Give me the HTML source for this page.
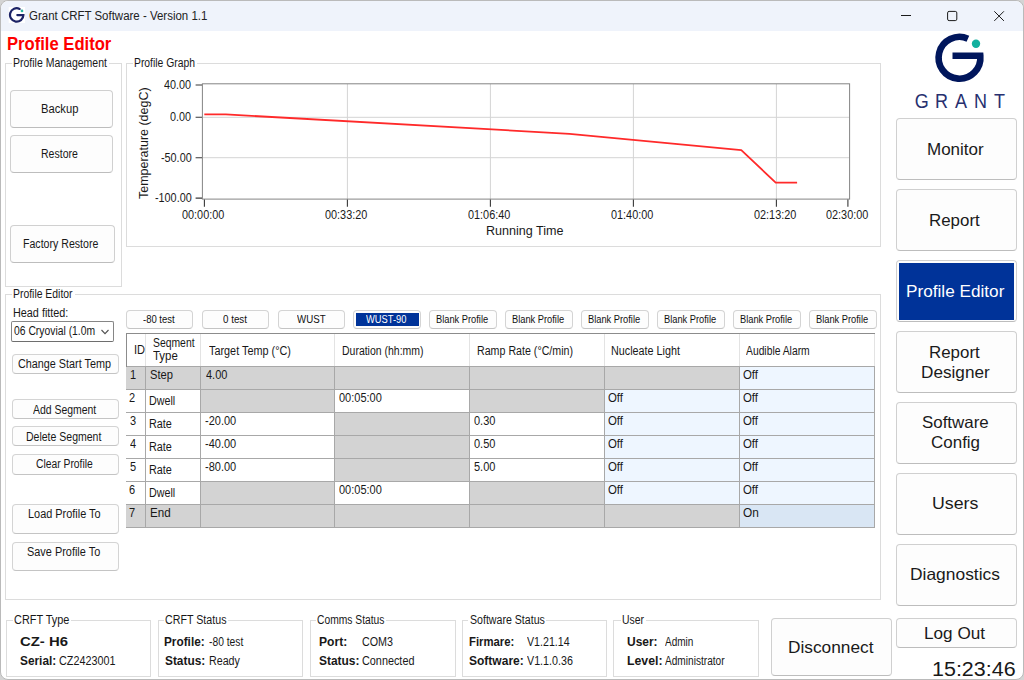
<!DOCTYPE html>
<html><head><meta charset="utf-8"><title>Grant CRFT Software - Version 1.1</title><style>
html,body{margin:0;padding:0}
body{width:1024px;height:680px;overflow:hidden;background:#d4d4d4;font-family:"Liberation Sans",sans-serif;position:relative}
#w{position:absolute;left:0;top:0;width:1022px;height:678px;border:1px solid #bababa;border-radius:8px;background:#fff;overflow:hidden}
#c{position:absolute;left:-1px;top:-1px;width:1024px;height:680px}
#c div,#c svg.a,#c span.t{position:absolute}
span.t{color:#181818;white-space:pre;line-height:1;transform-origin:0 50%;display:block}
.g{border:1px solid #dcdcdc;box-sizing:border-box}
.b{border:1px solid #d0d0d0;border-bottom-color:#bdbdbd;border-radius:4px;background:#fdfdfd;box-sizing:border-box}
.b.s{border-radius:4px;border-color:#d4d4d4;border-bottom-color:#c4c4c4}
</style></head><body><div id="w"><div id="c">
<div style="left:1px;top:1px;width:1022px;height:30px;background:#eff3fb;border-radius:7px 7px 0 0;"></div>
<svg class="a" style="left:8px;top:7px" width="17" height="17" viewBox="0 0 17 17"><rect x="0.7" y="0" width="16.3" height="16" fill="#fff"/><path d="M11.6 1.9 A6.7 6.7 0 1 0 15.4 8.1 L9.3 8.1" fill="none" stroke="#1c2366" stroke-width="2.2" stroke-linecap="round"/><circle cx="14" cy="3.9" r="1.35" fill="#2bb5a0"/></svg>
<span class="t" style="left:29.23px;top:10px;font-size:12px;transform:scaleX(0.9561);color:#222;">Grant CRFT Software - Version 1.1</span>
<svg class="a" style="left:896px;top:6px" width="116" height="20" viewBox="0 0 116 20" fill="none" stroke="#1a1a1a" stroke-width="1"><path d="M5 9.5h10"/><rect x="51.6" y="5.4" width="9.2" height="9.2" rx="1.5"/><path d="M98.3 5.3l9.6 9.6M107.9 5.3l-9.6 9.6"/></svg>
<span class="t" style="left:6.70px;top:36px;font-size:17.6px;transform:scaleX(0.9442);font-weight:700;color:#ff0000;">Profile Editor</span>
<div class="g" style="left:5.0px;top:62.5px;width:116.6px;height:224px;"></div>
<div style="left:12px;top:57px;width:97px;height:12px;background:#fff;"></div>
<span class="t" style="left:13.14px;top:57px;font-size:12px;transform:scaleX(0.8747);">Profile Management</span>
<div class="g" style="left:125.5px;top:62.5px;width:755px;height:184px;"></div>
<div style="left:133px;top:57px;width:63.5px;height:12px;background:#fff;"></div>
<span class="t" style="left:134.15px;top:57px;font-size:12px;transform:scaleX(0.8631);">Profile Graph</span>
<div class="g" style="left:5.0px;top:293.5px;width:875.5px;height:306px;"></div>
<div style="left:12px;top:288px;width:62.5px;height:12px;background:#fff;"></div>
<span class="t" style="left:13.15px;top:288px;font-size:12px;transform:scaleX(0.8664);">Profile Editor</span>
<div class="g" style="left:5.7px;top:619.5px;width:145.8px;height:57.2px;"></div>
<div style="left:12.6px;top:614px;width:58.4px;height:12px;background:#fff;"></div>
<span class="t" style="left:14.05px;top:614px;font-size:12px;transform:scaleX(0.9099);">CRFT Type</span>
<div class="g" style="left:157.9px;top:619.5px;width:145.5px;height:57.2px;"></div>
<div style="left:163.9px;top:614px;width:64.6px;height:12px;background:#fff;"></div>
<span class="t" style="left:165.37px;top:614px;font-size:12px;transform:scaleX(0.8899);">CRFT Status</span>
<div class="g" style="left:309.5px;top:619.5px;width:146px;height:57.2px;"></div>
<div style="left:315.9px;top:614px;width:70.60000000000002px;height:12px;background:#fff;"></div>
<span class="t" style="left:317.39px;top:614px;font-size:12px;transform:scaleX(0.8577);">Comms Status</span>
<div class="g" style="left:461.5px;top:619.5px;width:145.5px;height:57.2px;"></div>
<div style="left:468.25px;top:614px;width:78.0px;height:12px;background:#fff;"></div>
<span class="t" style="left:469.77px;top:614px;font-size:12px;transform:scaleX(0.8837);">Software Status</span>
<div class="g" style="left:613.25px;top:619.5px;width:145.7px;height:57.2px;"></div>
<div style="left:620.5px;top:614px;width:25.0px;height:12px;background:#fff;"></div>
<span class="t" style="left:621.70px;top:614px;font-size:12px;transform:scaleX(0.8672);">User</span>
<div class="b" style="left:9.8px;top:89.8px;width:103.1px;height:38.4px;"></div>
<span class="t" style="left:41.08px;top:103px;font-size:12px;transform:scaleX(0.9340);">Backup</span>
<div class="b" style="left:9.8px;top:134.8px;width:103.1px;height:37.8px;"></div>
<span class="t" style="left:41.14px;top:148px;font-size:12px;transform:scaleX(0.8765);">Restore</span>
<div class="b" style="left:9.8px;top:224.8px;width:105px;height:38px;"></div>
<span class="t" style="left:23.13px;top:238px;font-size:12px;transform:scaleX(0.8826);">Factory Restore</span>
<span class="t" style="left:13.11px;top:307px;font-size:12px;transform:scaleX(0.9023);">Head fitted:</span>
<div style="left:11px;top:321px;width:102.8px;height:20.8px;border:1px solid #868686;border-bottom-color:#6e6e6e;border-radius:2px;background:#fff;box-sizing:border-box;"></div>
<span class="t" style="left:13.60px;top:325px;font-size:12px;transform:scaleX(0.8622);">06 Cryovial (1.0m</span>
<svg class="a" style="left:100px;top:328px" width="10" height="8" viewBox="0 0 10 8"><path d="M1.5 2 L5 5.6 L8.5 2" fill="none" stroke="#505050" stroke-width="1.1"/></svg>
<div class="b s" style="left:11.6px;top:353.9px;width:107.3px;height:19.7px;"></div>
<span class="t" style="left:17.76px;top:358px;font-size:12px;transform:scaleX(0.9007);">Change Start Temp</span>
<div class="b s" style="left:11.6px;top:399.3px;width:107.3px;height:20px;"></div>
<span class="t" style="left:32.73px;top:404px;font-size:12px;transform:scaleX(0.8697);">Add Segment</span>
<div class="b s" style="left:11.6px;top:426.4px;width:107.3px;height:20px;"></div>
<span class="t" style="left:26.24px;top:431px;font-size:12px;transform:scaleX(0.8755);">Delete Segment</span>
<div class="b s" style="left:11.6px;top:454.25px;width:107.3px;height:20.25px;"></div>
<span class="t" style="left:35.73px;top:458px;font-size:12px;transform:scaleX(0.8606);">Clear Profile</span>
<div class="b s" style="left:11.6px;top:504px;width:107.3px;height:30px;"></div>
<span class="t" style="left:27.86px;top:508px;font-size:12px;transform:scaleX(0.9093);">Load Profile To</span>
<div class="b s" style="left:11.6px;top:542px;width:107.3px;height:29px;"></div>
<span class="t" style="left:27.26px;top:546px;font-size:12px;transform:scaleX(0.9094);">Save Profile To</span>
<div class="b s" style="left:125.5px;top:309.6px;width:67.8px;height:19px;"></div>
<span class="t" style="left:142.98px;top:315px;font-size:10px;transform:scaleX(0.9501);color:#111;">-80 test</span>
<div class="b s" style="left:201.5px;top:309.6px;width:67.8px;height:19px;"></div>
<span class="t" style="left:222.62px;top:315px;font-size:10px;transform:scaleX(0.9792);color:#111;">0 test</span>
<div class="b s" style="left:277.5px;top:309.6px;width:67.8px;height:19px;"></div>
<span class="t" style="left:297.31px;top:315px;font-size:10px;transform:scaleX(0.9700);color:#111;">WUST</span>
<div class="b s" style="left:353px;top:309.6px;width:67.8px;height:19px;"></div>
<div style="left:356.1px;top:312.6px;width:62.6px;height:13.3px;background:#003399;"></div>
<span class="t" style="left:366.46px;top:315px;font-size:10px;transform:scaleX(0.9320);color:#fff;">WUST-90</span>
<div class="b s" style="left:429px;top:309.6px;width:67.8px;height:19px;"></div>
<span class="t" style="left:436.34px;top:315px;font-size:10px;transform:scaleX(0.9293);color:#111;">Blank Profile</span>
<div class="b s" style="left:505px;top:309.6px;width:67.8px;height:19px;"></div>
<span class="t" style="left:512.34px;top:315px;font-size:10px;transform:scaleX(0.9293);color:#111;">Blank Profile</span>
<div class="b s" style="left:581px;top:309.6px;width:67.8px;height:19px;"></div>
<span class="t" style="left:588.34px;top:315px;font-size:10px;transform:scaleX(0.9293);color:#111;">Blank Profile</span>
<div class="b s" style="left:657px;top:309.6px;width:67.8px;height:19px;"></div>
<span class="t" style="left:664.34px;top:315px;font-size:10px;transform:scaleX(0.9293);color:#111;">Blank Profile</span>
<div class="b s" style="left:733px;top:309.6px;width:67.8px;height:19px;"></div>
<span class="t" style="left:740.34px;top:315px;font-size:10px;transform:scaleX(0.9293);color:#111;">Blank Profile</span>
<div class="b s" style="left:809px;top:309.6px;width:67.8px;height:19px;"></div>
<span class="t" style="left:816.34px;top:315px;font-size:10px;transform:scaleX(0.9293);color:#111;">Blank Profile</span>
<div style="left:126px;top:333px;width:748px;height:194.5px;background:#fff;"></div>
<div style="left:126px;top:366px;width:19.900000000000006px;height:23px;background:#d3d3d3;"></div>
<div style="left:145.9px;top:366px;width:54.900000000000006px;height:23px;background:#d3d3d3;"></div>
<div style="left:200.8px;top:366px;width:133.7px;height:23px;background:#d3d3d3;"></div>
<div style="left:334.5px;top:366px;width:135.0px;height:23px;background:#d3d3d3;"></div>
<div style="left:469.5px;top:366px;width:135.0px;height:23px;background:#d3d3d3;"></div>
<div style="left:604.5px;top:366px;width:135.0px;height:23px;background:#d3d3d3;"></div>
<div style="left:739.5px;top:366px;width:134.5px;height:23px;background:#eef6ff;"></div>
<div style="left:200.8px;top:389px;width:133.7px;height:23px;background:#d3d3d3;"></div>
<div style="left:469.5px;top:389px;width:135.0px;height:23px;background:#d3d3d3;"></div>
<div style="left:604.5px;top:389px;width:135.0px;height:23px;background:#eef6ff;"></div>
<div style="left:739.5px;top:389px;width:134.5px;height:23px;background:#eef6ff;"></div>
<div style="left:334.5px;top:412px;width:135.0px;height:23px;background:#d3d3d3;"></div>
<div style="left:604.5px;top:412px;width:135.0px;height:23px;background:#eef6ff;"></div>
<div style="left:739.5px;top:412px;width:134.5px;height:23px;background:#eef6ff;"></div>
<div style="left:334.5px;top:435px;width:135.0px;height:23px;background:#d3d3d3;"></div>
<div style="left:604.5px;top:435px;width:135.0px;height:23px;background:#eef6ff;"></div>
<div style="left:739.5px;top:435px;width:134.5px;height:23px;background:#eef6ff;"></div>
<div style="left:334.5px;top:458px;width:135.0px;height:23px;background:#d3d3d3;"></div>
<div style="left:604.5px;top:458px;width:135.0px;height:23px;background:#eef6ff;"></div>
<div style="left:739.5px;top:458px;width:134.5px;height:23px;background:#eef6ff;"></div>
<div style="left:200.8px;top:481px;width:133.7px;height:23px;background:#d3d3d3;"></div>
<div style="left:469.5px;top:481px;width:135.0px;height:23px;background:#d3d3d3;"></div>
<div style="left:604.5px;top:481px;width:135.0px;height:23px;background:#eef6ff;"></div>
<div style="left:739.5px;top:481px;width:134.5px;height:23px;background:#eef6ff;"></div>
<div style="left:126px;top:504px;width:19.900000000000006px;height:23px;background:#d3d3d3;"></div>
<div style="left:145.9px;top:504px;width:54.900000000000006px;height:23px;background:#d3d3d3;"></div>
<div style="left:200.8px;top:504px;width:133.7px;height:23px;background:#d3d3d3;"></div>
<div style="left:334.5px;top:504px;width:135.0px;height:23px;background:#d3d3d3;"></div>
<div style="left:469.5px;top:504px;width:135.0px;height:23px;background:#d3d3d3;"></div>
<div style="left:604.5px;top:504px;width:135.0px;height:23px;background:#d3d3d3;"></div>
<div style="left:739.5px;top:504px;width:134.5px;height:23px;background:#d9e6f4;"></div>
<div style="left:126px;top:365.6px;width:748.5px;height:1px;background:#a8a8a8;"></div>
<div style="left:126px;top:388.6px;width:748.5px;height:1px;background:#a8a8a8;"></div>
<div style="left:126px;top:411.6px;width:748.5px;height:1px;background:#a8a8a8;"></div>
<div style="left:126px;top:434.6px;width:748.5px;height:1px;background:#a8a8a8;"></div>
<div style="left:126px;top:457.6px;width:748.5px;height:1px;background:#a8a8a8;"></div>
<div style="left:126px;top:480.6px;width:748.5px;height:1px;background:#a8a8a8;"></div>
<div style="left:126px;top:503.6px;width:748.5px;height:1px;background:#a8a8a8;"></div>
<div style="left:126px;top:526.6px;width:748.5px;height:1px;background:#a8a8a8;"></div>
<div style="left:145.4px;top:366px;width:1px;height:161.5px;background:#a8a8a8;"></div>
<div style="left:145.4px;top:334px;width:1px;height:32px;background:#e3e3e3;"></div>
<div style="left:200.3px;top:366px;width:1px;height:161.5px;background:#a8a8a8;"></div>
<div style="left:200.3px;top:334px;width:1px;height:32px;background:#e3e3e3;"></div>
<div style="left:334.0px;top:366px;width:1px;height:161.5px;background:#a8a8a8;"></div>
<div style="left:334.0px;top:334px;width:1px;height:32px;background:#e3e3e3;"></div>
<div style="left:469.0px;top:366px;width:1px;height:161.5px;background:#a8a8a8;"></div>
<div style="left:469.0px;top:334px;width:1px;height:32px;background:#e3e3e3;"></div>
<div style="left:604.0px;top:366px;width:1px;height:161.5px;background:#a8a8a8;"></div>
<div style="left:604.0px;top:334px;width:1px;height:32px;background:#e3e3e3;"></div>
<div style="left:739.0px;top:366px;width:1px;height:161.5px;background:#a8a8a8;"></div>
<div style="left:739.0px;top:334px;width:1px;height:32px;background:#e3e3e3;"></div>
<div style="left:873.5px;top:366px;width:1px;height:161.5px;background:#a8a8a8;"></div>
<div style="left:873.5px;top:334px;width:1px;height:32px;background:#e3e3e3;"></div>
<div style="left:126px;top:332.8px;width:748.5px;height:1px;background:#8c8c8c;"></div>
<div style="left:125.9px;top:333px;width:1px;height:33.5px;background:#8c8c8c;"></div>
<span class="t" style="left:133.98px;top:344px;font-size:12px;transform:scaleX(0.9195);">ID</span>
<span class="t" style="left:153.03px;top:337px;font-size:12px;transform:scaleX(0.8648);">Seqment</span>
<span class="t" style="left:153.25px;top:350px;font-size:12px;transform:scaleX(0.9515);">Type</span>
<span class="t" style="left:208.76px;top:345px;font-size:12px;transform:scaleX(0.9041);">Target Temp (°C)</span>
<span class="t" style="left:341.64px;top:345px;font-size:12px;transform:scaleX(0.8731);">Duration (hh:mm)</span>
<span class="t" style="left:476.63px;top:345px;font-size:12px;transform:scaleX(0.8879);">Ramp Rate (°C/min)</span>
<span class="t" style="left:611.12px;top:345px;font-size:12px;transform:scaleX(0.8989);">Nucleate Light</span>
<span class="t" style="left:746.28px;top:345px;font-size:12px;transform:scaleX(0.8602);">Audible Alarm</span>
<span class="t" style="left:129.66px;top:369px;font-size:12px;transform:scaleX(0.9174);">1</span>
<span class="t" style="left:150.00px;top:369px;font-size:12px;transform:scaleX(0.9302);">Step</span>
<span class="t" style="left:205.56px;top:369px;font-size:12px;transform:scaleX(0.9174);">4.00</span>
<span class="t" style="left:743.46px;top:369px;font-size:12px;transform:scaleX(0.9507);">Off</span>
<span class="t" style="left:129.45px;top:392px;font-size:12px;transform:scaleX(0.9174);">2</span>
<span class="t" style="left:149.12px;top:395px;font-size:12px;transform:scaleX(0.8925);">Dwell</span>
<span class="t" style="left:339.07px;top:392px;font-size:12px;transform:scaleX(0.9174);">00:05:00</span>
<span class="t" style="left:608.46px;top:392px;font-size:12px;transform:scaleX(0.9507);">Off</span>
<span class="t" style="left:743.46px;top:392px;font-size:12px;transform:scaleX(0.9507);">Off</span>
<span class="t" style="left:129.58px;top:415px;font-size:12px;transform:scaleX(0.9174);">3</span>
<span class="t" style="left:149.11px;top:418px;font-size:12px;transform:scaleX(0.9021);">Rate</span>
<span class="t" style="left:205.32px;top:415px;font-size:12px;transform:scaleX(0.9174);">-20.00</span>
<span class="t" style="left:474.07px;top:415px;font-size:12px;transform:scaleX(0.9174);">0.30</span>
<span class="t" style="left:608.46px;top:415px;font-size:12px;transform:scaleX(0.9507);">Off</span>
<span class="t" style="left:743.46px;top:415px;font-size:12px;transform:scaleX(0.9507);">Off</span>
<span class="t" style="left:129.76px;top:438px;font-size:12px;transform:scaleX(0.9174);">4</span>
<span class="t" style="left:149.11px;top:441px;font-size:12px;transform:scaleX(0.9021);">Rate</span>
<span class="t" style="left:205.32px;top:438px;font-size:12px;transform:scaleX(0.9174);">-40.00</span>
<span class="t" style="left:474.07px;top:438px;font-size:12px;transform:scaleX(0.9174);">0.50</span>
<span class="t" style="left:608.46px;top:438px;font-size:12px;transform:scaleX(0.9507);">Off</span>
<span class="t" style="left:743.46px;top:438px;font-size:12px;transform:scaleX(0.9507);">Off</span>
<span class="t" style="left:129.56px;top:461px;font-size:12px;transform:scaleX(0.9174);">5</span>
<span class="t" style="left:149.11px;top:464px;font-size:12px;transform:scaleX(0.9021);">Rate</span>
<span class="t" style="left:205.32px;top:461px;font-size:12px;transform:scaleX(0.9174);">-80.00</span>
<span class="t" style="left:474.06px;top:461px;font-size:12px;transform:scaleX(0.9174);">5.00</span>
<span class="t" style="left:608.46px;top:461px;font-size:12px;transform:scaleX(0.9507);">Off</span>
<span class="t" style="left:743.46px;top:461px;font-size:12px;transform:scaleX(0.9507);">Off</span>
<span class="t" style="left:129.45px;top:484px;font-size:12px;transform:scaleX(0.9174);">6</span>
<span class="t" style="left:149.12px;top:487px;font-size:12px;transform:scaleX(0.8925);">Dwell</span>
<span class="t" style="left:339.07px;top:484px;font-size:12px;transform:scaleX(0.9174);">00:05:00</span>
<span class="t" style="left:608.46px;top:484px;font-size:12px;transform:scaleX(0.9507);">Off</span>
<span class="t" style="left:743.46px;top:484px;font-size:12px;transform:scaleX(0.9507);">Off</span>
<span class="t" style="left:129.44px;top:507px;font-size:12px;transform:scaleX(0.9174);">7</span>
<span class="t" style="left:149.55px;top:507px;font-size:12px;transform:scaleX(0.9696);">End</span>
<span class="t" style="left:743.44px;top:507px;font-size:12px;transform:scaleX(0.9880);">On</span>
<span class="t" style="left:19.64px;top:635px;font-size:13px;transform:scaleX(1.1455);font-weight:700;">CZ- H6</span>
<span class="t" style="left:19.92px;top:655px;font-size:12px;transform:scaleX(0.9873);font-weight:700;">Serial:</span>
<span class="t" style="left:58.71px;top:655px;font-size:12px;transform:scaleX(0.8995);">CZ2423001</span>
<span class="t" style="left:164.47px;top:636px;font-size:12px;transform:scaleX(0.9836);font-weight:700;">Profile:</span>
<span class="t" style="left:209.15px;top:636px;font-size:12px;transform:scaleX(0.8577);">-80 test</span>
<span class="t" style="left:164.92px;top:655px;font-size:12px;transform:scaleX(0.9890);font-weight:700;">Status:</span>
<span class="t" style="left:209.12px;top:655px;font-size:12px;transform:scaleX(0.8906);">Ready</span>
<span class="t" style="left:318.95px;top:636px;font-size:12px;transform:scaleX(1.0076);font-weight:700;">Port:</span>
<span class="t" style="left:362.36px;top:636px;font-size:12px;transform:scaleX(0.8941);">COM3</span>
<span class="t" style="left:319.42px;top:655px;font-size:12px;transform:scaleX(0.9954);font-weight:700;">Status:</span>
<span class="t" style="left:362.36px;top:655px;font-size:12px;transform:scaleX(0.9034);">Connected</span>
<span class="t" style="left:468.75px;top:636px;font-size:12px;transform:scaleX(0.9443);font-weight:700;">Firmare:</span>
<span class="t" style="left:526.96px;top:636px;font-size:12px;transform:scaleX(0.8869);">V1.21.14</span>
<span class="t" style="left:469.16px;top:655px;font-size:12px;transform:scaleX(1.0012);font-weight:700;">Software:</span>
<span class="t" style="left:526.96px;top:655px;font-size:12px;transform:scaleX(0.8936);">V1.1.0.36</span>
<span class="t" style="left:626.78px;top:636px;font-size:12px;transform:scaleX(0.9978);font-weight:700;">User:</span>
<span class="t" style="left:664.98px;top:636px;font-size:12px;transform:scaleX(0.8354);">Admin</span>
<span class="t" style="left:626.69px;top:655px;font-size:12px;transform:scaleX(1.0233);font-weight:700;">Level:</span>
<span class="t" style="left:664.98px;top:655px;font-size:12px;transform:scaleX(0.8428);">Administrator</span>
<div class="b" style="left:771px;top:618px;width:120.5px;height:58px;"></div>
<span class="t" style="left:788.08px;top:639px;font-size:16.5px;transform:scaleX(1.0479);color:#1a1a1a;">Disconnect</span>
<div class="b" style="left:895.5px;top:118px;width:121px;height:62.3px;"></div>
<div class="b" style="left:895.5px;top:189px;width:121px;height:62.3px;"></div>
<div class="b" style="left:895.5px;top:260px;width:121px;height:62.3px;"></div>
<div class="b" style="left:895.5px;top:331px;width:121px;height:62.3px;"></div>
<div class="b" style="left:895.5px;top:402px;width:121px;height:62.3px;"></div>
<div class="b" style="left:895.5px;top:473px;width:121px;height:62.3px;"></div>
<div class="b" style="left:895.5px;top:544px;width:121px;height:62.3px;"></div>
<div style="left:898.5px;top:263px;width:115.5px;height:56.5px;background:#003399;"></div>
<span class="t" style="left:926.61px;top:141px;font-size:16.5px;transform:scaleX(1.0301);color:#1a1a1a;">Monitor</span>
<span class="t" style="left:929.42px;top:212px;font-size:16.5px;transform:scaleX(1.0236);color:#1a1a1a;">Report</span>
<span class="t" style="left:906.09px;top:283px;font-size:16.5px;transform:scaleX(1.0415);color:#fff;">Profile Editor</span>
<span class="t" style="left:929.42px;top:344px;font-size:16.5px;transform:scaleX(1.0236);color:#1a1a1a;">Report</span>
<span class="t" style="left:920.59px;top:364px;font-size:16.5px;transform:scaleX(1.0401);color:#1a1a1a;">Designer</span>
<span class="t" style="left:922.04px;top:414px;font-size:16.5px;transform:scaleX(1.0245);color:#1a1a1a;">Software</span>
<span class="t" style="left:931.05px;top:434px;font-size:16.5px;transform:scaleX(1.0283);color:#1a1a1a;">Config</span>
<span class="t" style="left:932.03px;top:495px;font-size:16.5px;transform:scaleX(1.0772);color:#1a1a1a;">Users</span>
<span class="t" style="left:910.37px;top:566px;font-size:16.5px;transform:scaleX(1.0547);color:#1a1a1a;">Diagnostics</span>
<div class="b" style="left:895.5px;top:618px;width:121px;height:29.8px;"></div>
<span class="t" style="left:924.29px;top:625px;font-size:16.5px;transform:scaleX(1.0395);color:#1a1a1a;">Log Out</span>
<span class="t" style="left:931.57px;top:659px;font-size:20.3px;transform:scaleX(1.0589);">15:23:46</span>
<svg class="a" style="left:930px;top:30px" width="60" height="56" viewBox="930 30 60 56"><path d="M967.9 38.66 A20.9 20.9 0 1 0 980.3 55.8 L952.5 55.8" fill="none" stroke="#00165c" stroke-width="6.6" stroke-linejoin="miter"/><circle cx="976" cy="43.7" r="4.2" fill="#12b09e"/></svg>
<svg class="a" style="left:905px;top:88px" width="110" height="26" viewBox="905 88 110 26"><text transform="scale(0.9,1)" x="1016.35 1038.86 1061.11 1082.21 1104.46" y="108" font-family="Liberation Sans, sans-serif" font-size="20" fill="#27306f">GRANT</text></svg>
<svg class="a" style="left:126px;top:70px" width="754" height="176" viewBox="126 70 754 176"><rect x="202.4" y="83.8" width="647.2" height="115.3" fill="#fff"/><path d="M203 117.3H849.5" stroke="#d4d4d4" stroke-width="1"/><path d="M203 157.7H849.5" stroke="#d4d4d4" stroke-width="1"/><path d="M347.4 84V199" stroke="#d4d4d4" stroke-width="1"/><path d="M490.4 84V199" stroke="#d4d4d4" stroke-width="1"/><path d="M633.4 84V199" stroke="#d4d4d4" stroke-width="1"/><path d="M776.4 84V199" stroke="#d4d4d4" stroke-width="1"/><rect x="202.4" y="83.8" width="647.2" height="115.3" fill="none" stroke="#848484" stroke-width="1"/><path d="M195.6 85.0H202" stroke="#383838" stroke-width="1.1"/><path d="M195.6 117.3H202" stroke="#383838" stroke-width="1.1"/><path d="M195.6 157.7H202" stroke="#383838" stroke-width="1.1"/><path d="M195.6 198.1H202" stroke="#383838" stroke-width="1.1"/><path d="M204.4 199.5V206.8" stroke="#383838" stroke-width="1.1"/><path d="M347.4 199.5V206.8" stroke="#383838" stroke-width="1.1"/><path d="M490.4 199.5V206.8" stroke="#383838" stroke-width="1.1"/><path d="M633.4 199.5V206.8" stroke="#383838" stroke-width="1.1"/><path d="M776.4 199.5V206.8" stroke="#383838" stroke-width="1.1"/><path d="M847.9 199.5V206.8" stroke="#383838" stroke-width="1.1"/><polyline fill="none" stroke="#ff2a2a" stroke-width="1.8" stroke-linejoin="round" points="204.3,114.4 225.8,114.4 569.5,133.8 741.3,150.1 775.7,182.6 797.1,182.6"/></svg>
<span class="t" style="left:164.26px;top:79px;font-size:12px;transform:scaleX(0.9009);color:#1a1a1a;">40.00</span>
<span class="t" style="left:170.27px;top:111px;font-size:12px;transform:scaleX(0.9009);color:#1a1a1a;">0.00</span>
<span class="t" style="left:160.66px;top:152px;font-size:12px;transform:scaleX(0.9009);color:#1a1a1a;">-50.00</span>
<span class="t" style="left:154.65px;top:192px;font-size:12px;transform:scaleX(0.9009);color:#1a1a1a;">-100.00</span>
<span class="t" style="left:182.03px;top:209px;font-size:12px;transform:scaleX(0.9065);color:#1a1a1a;">00:00:00</span>
<span class="t" style="left:325.03px;top:209px;font-size:12px;transform:scaleX(0.9065);color:#1a1a1a;">00:33:20</span>
<span class="t" style="left:468.03px;top:209px;font-size:12px;transform:scaleX(0.9065);color:#1a1a1a;">01:06:40</span>
<span class="t" style="left:611.03px;top:209px;font-size:12px;transform:scaleX(0.9065);color:#1a1a1a;">01:40:00</span>
<span class="t" style="left:754.03px;top:209px;font-size:12px;transform:scaleX(0.9065);color:#1a1a1a;">02:13:20</span>
<span class="t" style="left:825.53px;top:209px;font-size:12px;transform:scaleX(0.9065);color:#1a1a1a;">02:30:00</span>
<span class="t" style="left:486.47px;top:225px;font-size:12.5px;transform:scaleX(1.0060);color:#1a1a1a;">Running Time</span>
<span class="t" style="left:138.42px;top:199.27px;font-size:12.5px;color:#1a1a1a;transform-origin:0 0;transform:rotate(-90deg) scaleX(0.9973);">Temperature (degC)</span>
</div></div></body></html>
